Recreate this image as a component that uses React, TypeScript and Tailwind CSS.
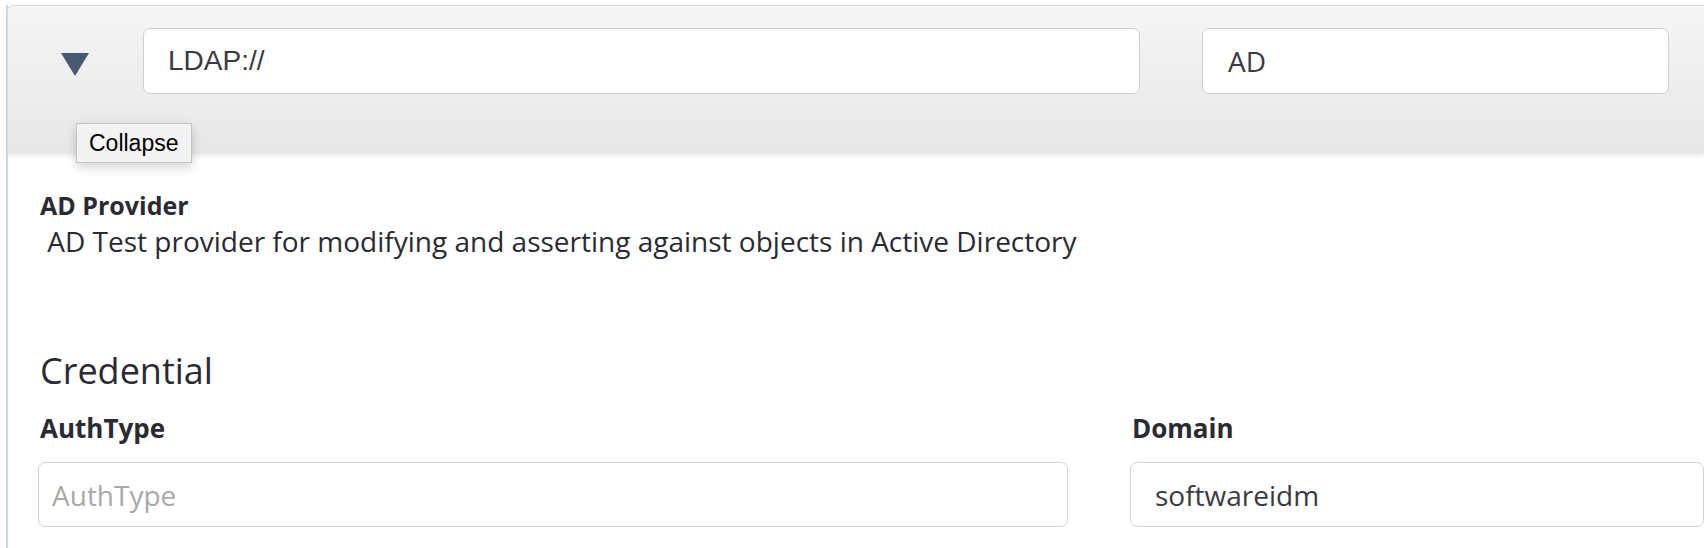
import React from "react";

const sans = { fontFamily: '"Open Sans", "Noto Sans", sans-serif' };
const arial = { fontFamily: '"Liberation Sans", Arial, sans-serif' };

function Field({ label, value, placeholder }: { label: string; value?: string; placeholder?: string }) {
  return (
    <div className="flex flex-col">
      <label className="pl-[2px] text-[26px] font-bold text-[#2a2a33] leading-[36px] mb-[16px]">{label}</label>
      <div className="h-[65px] rounded-[7px] border border-[#d2d2d2] bg-white flex items-center px-[24px]">
        {value ? (
          <span className="text-[28px] text-[#3a3a42]">{value}</span>
        ) : (
          <span className="text-[28px] text-[#a9a9a9] -ml-[11px]">{placeholder}</span>
        )}
      </div>
    </div>
  );
}

export default function App() {
  return (
    <div className="w-[1704px] h-[548px] overflow-hidden bg-white pt-[5px] pl-[6px]" style={sans}>
      <div className="relative border-l-2 border-[#c8d9ec] h-full">
        {/* header row */}
        <div className="-ml-[1px] h-[149px] rounded-tl-[6px] border-t border-l border-[#dcdcdc] bg-gradient-to-b from-[#f5f5f5] to-[#e7e7e7] shadow-[0_3px_4px_rgba(0,0,0,0.06)] flex items-start pt-[22px]">
          <div className="w-[135px] flex pt-[25px] pl-[53px]">
            <svg width="28" height="23" viewBox="0 0 28 23">
              <polygon points="0,0 28,0 14,23" fill="#4a5872" />
            </svg>
          </div>
          <div className="w-[997px] h-[66px] rounded-[7px] border border-[#cfcfcf] bg-white flex items-center px-[24px]">
            <span className="text-[28px] text-[#3a3a44]" style={arial}>
              LDAP://
            </span>
          </div>
          <div className="w-[467px] h-[66px] ml-[62px] rounded-[7px] border border-[#cfcfcf] bg-white flex items-center px-[25px]">
            <span className="text-[28px] text-[#3a3a44]">AD</span>
          </div>
        </div>

        {/* tooltip */}
        <div
          className="absolute left-[68px] top-[118px] h-[40px] px-[12px] flex items-center bg-[#f3f3f3] border border-[#c4c4c4] shadow-[0_4px_10px_rgba(0,0,0,0.18)] text-[23px] text-black"
          style={arial}
        >
          Collapse
        </div>

        {/* body */}
        <div className="pl-[30px] pt-[34px]">
          <div className="pl-[2px] text-[25px] font-bold text-[#2a2a33] leading-[34px]">AD Provider</div>
          <div className="pl-[2px] text-[28px] text-[#2a2a33] leading-[38px] whitespace-pre">
            {" AD Test provider for modifying and asserting against objects in Active Directory"}
          </div>

          <div className="pl-[2px] mt-[87px] text-[36px] text-[#2a2a33] leading-[48px]">Credential</div>
          <div className="mt-[15px] grid grid-cols-[1030px_1fr] gap-[62px]">
            <Field label="AuthType" placeholder="AuthType" />
            <Field label="Domain" value="softwareidm" />
          </div>
        </div>
      </div>
    </div>
  );
}
